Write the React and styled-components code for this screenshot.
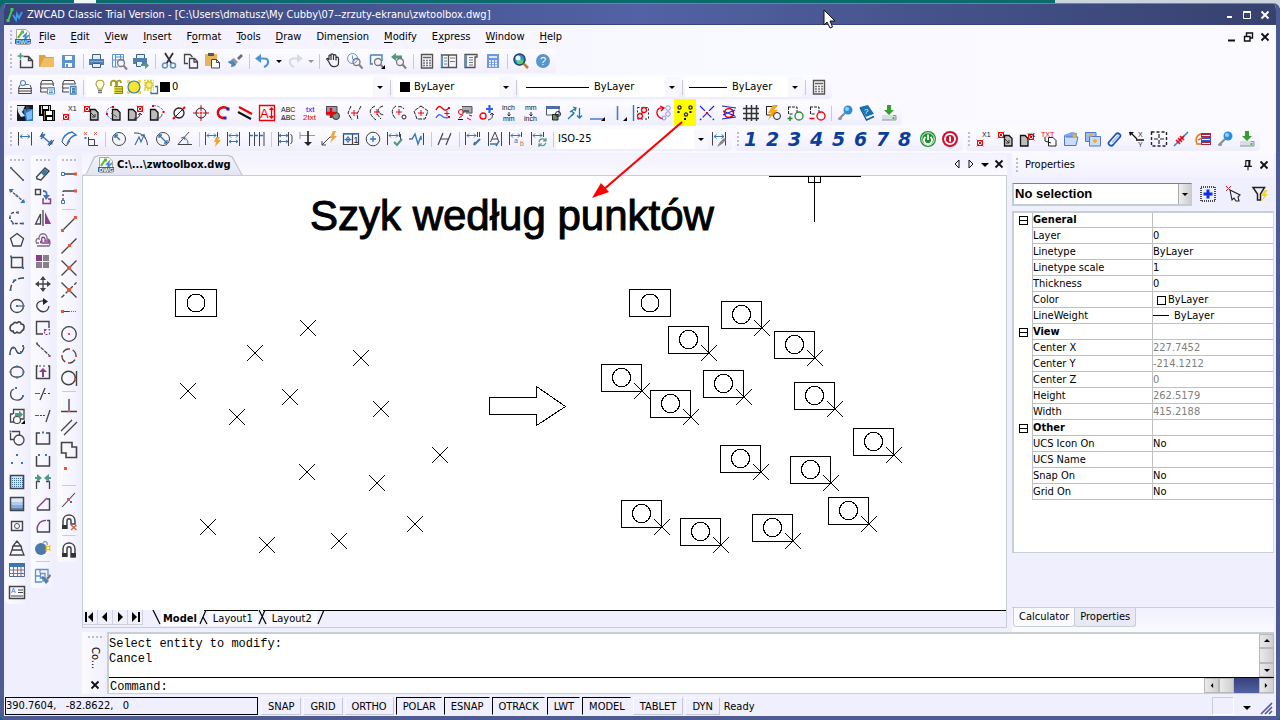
import React from "react";
import styled, { createGlobalStyle, css } from "styled-components";

const ui = `"DejaVu Sans Condensed", "DejaVu Sans", "Noto Sans", sans-serif`;

const Global = createGlobalStyle`
  * { box-sizing: border-box; }
  body { margin: 0; background: #0b6a6c; color: #000; font: 11px/14px ${ui}; }
  button, select, input { font: inherit; color: inherit; margin: 0; padding: 0; border: 0; background: none; border-radius: 0; }
  svg { display: block; flex: none; }
`;

/* ---------- icon drawing helpers ---------- */
const K = "#444444";
const B = "#3a77b2";
const P = "#8b3f86";
const R = "#f00000";
const O = "#df5a3c";
const G = "#4f9a80";
const L = "#6262f0";

const S = (color, d, w = 1, dash) => ({ color, d, w, dash });
const F = (color, d) => ({ color, d, fill: true });
const T = (x, y, size, color, text) => ({ x, y, size, color, text });
const C = (x, y, r) => `M${x - r} ${y}a${r} ${r} 0 1 0 ${2 * r} 0a${r} ${r} 0 1 0 ${-2 * r} 0Z`;
const D = (color, ...pts) => F(color, pts.map(([x, y]) => `M${x - 1} ${y - 1}h2v2h-2z`).join(""));
const D3 = (color, ...pts) => F(color, pts.map(([x, y]) => `M${x - 1.5} ${y - 1.5}h3v3h-3z`).join(""));

const page = [F("#bdbdbd", "M7 4h5l3 3v8H7z"), S("#111", "M7.5 4.5H12L15 7.5V15H7.5Z", 1.3)];
const pageL = [F("#bdbdbd", "M1 4h5l3 3v8H1z"), S("#111", "M1.5 4.5H6L9 7.5V15H1.5Z", 1.3)];
const redBox = (x, y) => [S(R, `M${x} ${y}h5v5h-5z`), S(R, `M${x - 1} ${y - 1}l7 7M${x + 6} ${y - 1}l-7 7`, 0.6), D(R, [x + 2.5, y + 2.5])];
const dim = [S(K, "M1.5 1V14.5M14.5 1V14.5"), S(B, "M3 5.5H13M5.5 3.5L3 5.5L5.5 7.5M10.5 3.5L13 5.5L10.5 7.5")];
const dimTop = [S(K, "M.5 1V14M12.5 1V6"), S(B, "M2 4.5H11M4 2.5L2 4.5L4 6.5M9 2.5L11 4.5L9 6.5")];
const lens = (x, y) => [S("#777", C(x, y, 3.5), 1.3), S("#8a7d88", `M${x + 2.5} ${y + 2.5}L${x + 6} ${y + 6.5}`, 2)];
const drop = [F("#000", "M16 12v4h-4z")];
const keyIcon = [S("#8a949c", "M8 8L1.5 14.5M3 13l1.5 1.5", 2.4), F("#2c8fd8", C(11, 5, 4.5)), F("#8fd2f8", C(10, 4, 2))];
const installIcon = [F("#33a02c", "M6 0h4v5h3L8 10L3 5h3z"), F("#d9dee4", "M1 10h14v5H1z"), S("#8b949c", "M1 15h14V10.5H12"), D("#3fbf3f", [12.5, 13])];

const icons = {
  new: [S(K, "M3.5 7V14.5H15.5V7.5L11.5 3.5H6.5M11.5 3.5V7.5H15.5", 1.4), S(G, "M3.5 0V6M.5 3H6.5", 1.6)],
  open: [F("#e0a33c", "M0 2h6l1 2h8v10H0z"), F("#f0bd63", "M5 5h10v9H1z")],
  save: [F("#5b93cc", "M1 2h13v13H1z"), F("#fff", "M4 3h7v4H4zM4 10h7v4H4z"), F("#5b93cc", "M5 11h2v3H5z")],
  print: [F("#4f7fae", "M0 6h15v6H0z"), F("#e9eef6", "M3 1h9v5H3zM3 10h9v5H3z"), S("#3b5f86", "M3.5 6V1.5H11.5V6M3.5 10.5H11.5V14.5H3.5Z"), S("#7fb1e2", "M1 8.5h13")],
  preview: [S("#5b93cc", "M1.5 1.5H12.5V7M1.5 1.5V14H7M4.5 1.5V7M9.5 1.5V7M1.5 7H12M4.5 4H12M4.5 7V14"), ...lens(10, 10)],
  publish: [F("#4f7fae", "M0 5h14v6H0z"), F("#e9eef6", "M3 1h8v4H3zM3 9h6v4H3z"), S("#3b5f86", "M3.5 5V1.5H11.5V5M3.5 9V13.5H8"), F(G, "M8 11h4V8.5l4 4l-4 3.5v-3H8z")],
  cut: [S("#333", "M4 0L10.5 10.5M12 0L5.5 10.5", 1.8), S("#5f92bf", C(4, 12.5, 2.5) + C(12, 12.5, 2.5), 1.5)],
  copy: [S(K, "M5 10.5H1.5V1.5H7L9.5 4", 1.3), S(K, "M6.5 5.5H11.5L14.5 8.5V15H6.5ZM11 5.5V9H14.5", 1.3)],
  paste: [F("#e8b45a", "M0 1h12v12H0z"), F("#555", "M3 0h6v3H3z"), F("#fff", "M6 6h6l3 3v6H6z"), S(K, "M6.5 6.5H11.5L14.5 9.5V15H6.5ZM11.5 6.5V9.5H14.5")],
  match: [F("#6b6f78", "M10 5L14 1L16 3L12 7z"), F("#8f97a3", "M7 5l4 4-2 2-5-4z"), F("#4c86ba", "M1 8c2 1 3-1 4-1l4 4c0 2-3 3-5 3 0-1 1-2 0-3-1 0-3-1-3-3z")],
  undo: [S("#4f93d4", "M3 5.5H9C15 5.5 14 12 9 14", 2.2), F("#4f93d4", "M6 1v9L0 5.5z")],
  redo: [S("#d6dae4", "M13 5.5H7C1 5.5 2 12 7 14", 2.2), F("#d6dae4", "M10 1v9l6-4.5z")],
  pan: [S("#333", "M4 9L2 6.5C1 5 3 5 4 7V3C4 1.5 6 1.5 6 3V7M6 7V2C6 .5 8 .5 8.5 2V7M8.5 7V2.5C9 1 11 1.5 11 3V7.5M11 7.5V5C12 3.5 13.5 4 13.5 5.5V10C13.5 14 6 16 4 9", 1.2)],
  zoomrt: [S("#5b93cc", C(5.5, 5.5, 5) + "M5.5 2.5V6L8 7.5"), ...lens(9.5, 9)],
  zoomwin: [S("#4a80ba", "M1.5 2H13V8M1.5 2V11H4", 1.4), ...lens(9, 9), ...drop],
  zoomprev: [F(G, "M0 4L5 0V2.5H11V5.5H5V8z"), ...lens(9, 9)],
  calc: [S("#5a524f", "M2.5 1.5H13.5V15H2.5Z", 1.4), S("#666", "M4 4.5H12", 1.5), S("#777", "M4 7.5H12M4 10H12M4 12.5H12", 1.5, "2 1")],
  design: [S("#5a524f", "M.5 2H15.5V14.5H.5ZM7.5 2V14.5", 1.3), S("#777", "M3 5H6M3 8H6M3 11H6M9 5H14M9 8.5H14"), S("#4f93d4", "M1 3V14", 2)],
  palette: [S("#5a524f", "M2 1.5H14V4H12V14.5H2Z", 1.3), S("#4f93d4", "M3 2V14", 2), S("#777", "M6 4.5H10M6 7H10M6 9.5H10M6 12H10")],
  bluecalc: [F("#6d97e0", "M2 1h12v14H2z"), F("#dbe8ff", "M4 3h8v2H4z"), S("#fff", "M4 8H12M4 10.5H12M4 13H12", 1.5, "2 1")],
  find: [F("#2f8fc8", C(6.5, 6.5, 6)), F("#54d07a", C(7, 9, 3)), F("#e7f6ff", C(5, 5, 2.5)), S("#24476b", C(6.5, 6.5, 5.5), 1.4), S("#c07a32", "M10.5 10.5L15 15", 2.5)],
  help: [F("#5b93cc", C(8, 8, 7)), T(5, 12, 11, "#fff", "?")],

  layers: [S(K, "M3 6L1.5 9.5H14.5L13 6M2 9.5L1.5 12H14.5L14 9.5M2 12L1.5 14.5H14.5L14 12"), S("#5b86b4", C(6, 4, 2.5) + "M8 5.5H12", 1.2)],
  layermgr: [S(K, "M3 1.5H13L14.5 5H1.5ZM2 5L1.5 9H8M2 9L1.5 13H8M14 5L14.5 7"), F("#fff", "M8 8h8v8H8z"), S("#5b93cc", "M8.5 8.5H15.5V15H8.5ZM8 10H16M10 12H14M10 13.5H14")],
  layerstate: [S(K, "M3 1.5H13L14.5 5H1.5ZM2 5L1.5 9H8M2 9L1.5 13H8"), F("#fff", "M9 7h6v8H9z"), S("#4b83b6", "M9.5 7.5H15V15H9.5ZM11 9.5H14M11 11H14", 1.3), F("#4b83b6", "M11 12h3v2h-3z")],
  bulb: [F("#fffbe0", C(8, 5.5, 4)), S("#ada23c", "M6 10C6 8 4 7 4 5C4 0 12 0 12 5C12 7 10 8 10 10Z", 1.2), S("#777", "M6 11.5H10M6 13.5H10", 1.3)],
  lock: [S("#a79e20", "M2 7V4C2 1 7 1 7 4V8M8 7V3C9 1 12 1 12 4", 1.8), F("#e4da49", "M5 7h9v8H5z"), S("#8d8619", "M5.5 7.5H13.5V14.5H5.5M6 10H13M6 12.5H13")],
  sun: [F("#e8dc58", "M1 1h3v3H1zM12 1h3v3h-3zM1 12h3v3H1zM12 12h3v3h-3z"), F("#f8e531", C(8, 8, 6)), S("#3a8198", C(8, 8, 6), 1.2)],
  sunvp: [S("#e0cf38", "M1 1.5H11M1 4H11M1 6.500H11M1 9H11M1 11H11", 1.5, "2 1"), F("#d3c736", C(6, 6, 4)), F("#f5ed80", C(6, 6, 2.5)), S("#3c7290", "M12 7.5H14.5V14.5H8V12.5", 1.3)],

  earth: [F("#101a26", "M0 0h16v16H0z"), F("#2c77c8", "M6 4h10v12H9z"), F("#7cc0ff", "M9 8l6-3v9l-5 1z"), F("#dfe6ea", "M0 1h8L5 7l3 4-4 1-3-5z"), F("#34414c", "M9 1l4 1-4 4z")],
  saves: [F("#000", "M0 0h12v11H0zM4 5h12v11H4z"), F("#d9dc4b", "M2 1h1v8H2zM10 1h1v5h-1z"), F("#fff", "M4 1h5v3H4zM7 6h6v4H7zM8 12h5v3H8z"), F("#7c7d20", "M5 6h1v9H5zM14 6h1v9h-1z")],
  numx: [...redBox(2.5, 9.5), T(7, 6, 7, "#111", "X1")],
  cpa: [...page, ...redBox(1.5, 1.5), S("#333", "M6 6L12 12M12 9V12H9")],
  cpb: [...page, S(L, "M8 2C3 2 1 6 2 9S5 14 7 14", 1, "3 1"), D(R, [2, 9], [8, 2]), S("#555", "M6 8L12 12")],
  cpc: [...pageL, ...redBox(10.5, 1.5), S("#333", "M7 13C10 14 13 12 13 9M11 10L13 8L15 10")],
  cpd: [...pageL, S(L, "M4 1C9 0 13 3 15 7", 1, "3 1"), D(R, [4, 1], [14.5, 7]), S("#555", "M7 13C10 14 13 12 13 9")],
  diam: [S("#222", C(8, 8, 5), 1.3), S("#222", "M2 14L14 2"), S(R, "M2 14l2-2M12 4l2-2", 2)],
  target: [S(R, "M8 0V6M8 10V16M0 8H6M10 8H16"), S("#222", C(8, 8, 5)), S(R, C(8, 8, 1))],
  carc: [S(R, "M13 4C8 0 2 4 3 9C4 12 6 13 9 13", 2.4), D3("#2020d0", [13, 4]), D3("#2020d0", [10, 13])],
  twolines: [S(R, "M2 2L15 9", 2), S("#111", "M1 7L14 14", 2)],
  aframe: [S(R, "M.5 .5H15.5V15.5H.5Z", 1.3), T(1, 13, 13, R, "A"), S(R, "M12.5 3V13M10.5 5L12.5 3L14.5 5M10.5 11L12.5 13L14.5 11", 1.3)],
  abc: [T(0, 7, 7, "#111", "ABC"), T(0, 15, 7, "#111", "ABC"), S(L, "M1 14.5H7")],
  txt: [T(3, 7, 8, "#1010e8", "txt"), T(0, 15, 8, R, "2txt")],
  attach: [F("#9d97ad", "M1 1h11v9H1z"), S("#4c4759", "M1.5 1.5H12V10H1.5Z"), F("#7c9678", C(11, 11, 3.5)), S("#333", C(11, 11, 3.5)), S(R, "M6 3V13M1 8H11", 2.4)],
  crossa: [S("#222", "M4 1L1 8L5 15M14 1L10 9L11 15", 1, "4 1"), S(R, "M4 8H10M7 5V11")],
  crossb: [S("#222", "M6 1C-1 4 0 10 7 15M14 1C7 3 8 9 15 10M8 9L12 14", 1, "4 1"), S(R, "M5 7H11M8 4V10")],
  crossc: [S("#222", "M5 1C0 4 0 9 5 14M7 2C9 1 12 2 13 4", 1, "4 1"), S("#222", C(13, 12, 2)), S(R, "M5 7H11M8 4V10")],
  crossd: [S("#222", "M8 1L15 6L12 14H4L1 6Z", 1, "4 1"), S(R, "M5 8H11M8 5V11")],
  waves: [S(R, "M1 5C3 2 4 0 7 3S11 6 14 3", 1.4), S("#3c7be0", "M1 13C3 9 5 9 7 11S12 13 14 12", 1.4), S(R, "M12 6V11M9.5 8.5H14.5"), D(R, [14, 3], [14, 12])],
  selnote: [F("#b0a8b6", "M5 1h10v7H5z"), S("#555", "M5 1.5H15V8H9"), S(R, C(4, 7, 2.5)), S("#111", "M7 6H12M1 14.5H6"), S(R, "M10 13l4 2M2 13l4-3M12 10l3 1")],
  addcirc: [S(R, C(4, 11, 3), 1.3), S("#2f5fe8", "M10.5 0V8M7 4H14", 2.2), S("#333", "M9 15C13 14 14 12 13 9M11 10L13 8L15 10")],
  inchmm: [T(1, 5, 7, "#111", "inch"), T(2, 16, 7, "#111", "mm"), S("#222", "M8 7V11M6.5 9.5L8 11L9.5 9.5")],
  mminch: [T(2, 5, 7, "#111", "mm"), T(1, 16, 7, "#111", "inch"), S("#222", "M8 7V11M6.5 9.5L8 11L9.5 9.5")],
  xref: [F("#fff", "M1 1h13v9H1z"), S("#4b5470", "M1.5 1.5H14V10H1.5Z"), F("#4b6fa8", "M1 1h14v3H1z"), F("#6e8a6c", "M7 9h6v6H7z"), S("#222", "M7.5 9.5H13V15H7.5Z" + C(13, 9, 2.5))],
  sorts: [S("#1f7bb0", "M1 14L7 8M4 6L7 8L5 11M3 7L9 3M6 2L9 3L8 6M12.5 3V13M10 10.5L12.5 13L15 10.5", 1.3)],
  hline: [S("#4a78d6", "M1 14H15", 1.6), ...drop],
  vline: [S("#4a78d6", "M6.5 1V15", 1.6), ...drop],
  redsel: [S("#1880d0", "M.5 0V16", 1.4), S("#222", "M4.5 2.5H15.5V14H4.5Z", 1, "2 2"), S(R, C(11, 5, 2.5) + C(7, 11, 2.5) + "M8 9L10 7", 1.3)],
  rotate: [S(R, "M8 3C2 2 0 8 4 12C5 13 6 14 8 13.5M5 1L9 3L6 6", 1.3), S("#8f8fee", C(13, 3, 2.3) + C(13, 9, 2.3) + C(9, 13, 2))],
  points: [S("#222", C(2.5, 2.5, 1.6) + C(13.5, 2.5, 1.6) + C(9, 9.5, 1.6), 1.3), D("#111", [1.5, 7], [13.5, 7], [8, 14])],
  xblue: [S("#2020e8", "M1 1L15 15M15 1L1 15", 1.2, "7 2"), D(R, [8, 8])],
  circline: [S(R, C(8, 8, 4.5), 1.6), S("#2020d0", "M1 1L15 3M2 6L14 11M14 5L2 10M1 14L15 12", 1.2)],
  grid: [S("#333", "M3.5 0V16M8.5 0V16M13.5 0V16M0 3.5H16M0 8.5H16M0 13.5H16", 1.5)],
  bolt: [S("#222", "M1 1.5H12M1.5 1V10H8"), F("#f4a71a", "M8 0h5L9 5h4L3 15l3-7H3z"), S("#222", C(12, 11, 3.5))],
  addsel: [S("#222", "M1 2H10V7M1.5 2V9H6", 1, "3 1"), S("#2a8a2a", C(12, 11, 4), 1.3), S("#2a8a2a", "M3 11V16M.5 13.5H5.5", 1.4)],
  remsel: [S("#222", "M1 2H10V7M1.5 2V9H6", 1, "3 1"), S(R, C(12, 11, 4), 1.3), S(R, "M.5 13.5H5.5", 1.6)],
  key: keyIcon,
  book: [F("#1673b5", "M1 2L9 0L15 9L7 12z"), F("#eaf6ff", "M7 12l8-3v2l-7 4z"), S("#0f5b96", "M1 2.500L7.500 15L15 11.500", 1.4), T(5, 9, 8, "#fff", "?")],
  install: installIcon,

  dlin: dim,
  dalign: [S(B, "M3 5L11 12M2 8L6 3M9 14L13 9", 1.5), D3(B, [3.5, 4.5], [12, 12]), S(K, "M1 6L4 1M10 15L15 9")],
  darc: [S(K, "M1 11L5 15L9 10"), S(B, "M1 11C2 6 6 2 11 1L15 4C10 5 8 8 6 13", 1.3)],
  dord: [S(K, "M5.5 6V14.5H15M5.5 8.5H11.5V14.5"), S("#c06a50", "M1 1L4 4M4 1L1 4M11 1l3 3M14 1l-3 3"), S(B, "M2.5 6V8", 2)],
  drad: [S(K, C(8, 8, 6.5)), S(B, "M4 4L9 9M4 7V4H7", 1.5)],
  djog: [S(K, "M1 2C9 1 14 7 14.5 14"), S(B, "M2 14L6 6L8 11L11 4M8 5L11 3.5L12 7", 1.2)],
  ddia: [S(K, C(8, 8, 6.5)), S(B, "M4 4L12 12M4 7V4H7M12 9V12H9", 1.3)],
  dang: [S(K, "M12 1L1 13.5H15"), S(B, "M7 6C10 8 11 10 11 13M4 7L7 6L8 9")],
  dquick: [...dimTop, F("#eda739", "M11 6h4l-2 3h3l-6 7 1-5H9z")],
  dbase: [...dimTop, S(K, "M12.5 6V15M.5 9V15"), S(B, "M2 10.5H11M4 9L2 10.5L4 12M9 9L11 10.5L9 12")],
  dcont: [S(K, "M.5 1V15M5.5 1V15M10.5 1V15M15 1V15"), S(B, "M1 4.5H15", 1.5, "3 2")],
  dspace: [S(K, "M1.5 1V15M11.5 1V15"), S(B, "M2 4.5H11M2 10.5H11M4 3L2 4.5L4 6M9 3L11 4.5L9 6M4 9L2 10.5L4 12M9 9L11 10.5L9 12"), S(K, "M13.5 3L15 5V11L13.5 13")],
  dbreak: [S("#999", "M1 4.5H16M1 1V8"), S("#222", "M9 0V12", 1.6), F("#222", "M5 11h8l-4 4z")],
  leader: [S(K, "M1 14L9 6H12M1 10V14H5"), F("#eda739", "M12 0h3l-2 5h3L9 12l2-5H9z")],
  tol: [S(K, "M.5 2.5H15.5V13.5H.5ZM9.5 2V13", 1.2), S(B, "M0 3H16", 1.6), S(B, C(5, 8.5, 2) + "M5 5V12M1.5 8.5H8.5"), T(10.5, 12, 9, "#222", "1")],
  center: [S(K, C(8, 8, 6.8)), S(B, "M8 5V11M5 8H11", 1.4)],
  inspect: [...dimTop, S(K, "M13.5 3V9"), S(G, "M7 11L10 14L15 8", 2)],
  jogline: [S(B, "M0 8H3L6 3L9 13L12 5V8H13", 1.4), S(K, "M14.5 2V14")],
  oblique: [S(K, "M1 14L6 2M9 14L14 2M3 8H12", 1.2)],
  dedit: [...dimTop, S(B, "M9 14L15 8M9 14l1-3", 2), S(K, "M14.5 1V6")],
  dtedit: [S(K, "M1.5 1V15M14.5 1V15M3.5 11L8 1L12 11M5 8H11"), S(B, "M3 13H10M12 10L9 15", 1.5)],
  doverride: [...dimTop, T(5, 12, 7, B, "a"), T(11, 15, 7, O, "b")],
  dupdate: [...dimTop, S(G, "M8 11C9 7 13 7 15 10M15 12C13 16 9 15 8 13M15 7V10H12M8 16V13H11", 1.2)],
  dstyle: [...dim, F("#8a8482", "M13 7l2 2-4 4-5 3 3-5z")],

  power: [F("#1d8f2a", C(8, 8, 8)), S("#fff", C(8, 8, 6.3), 0.9), S("#fff", "M5.500 6A4 4 0 1 0 10.500 6M8 3.5V9", 1.8)],
  stop: [F("#cf1130", C(8, 8, 8)), S("#fff", C(8, 8, 5), 1.8), S("#fff", "M8 5.5V10.5", 2)],
  cpx: [...pageL, ...redBox(9.5, 3.5), T(9, 6, 6, "#111", "X1")],
  cptxt: [F("#fff", "M7 6h5l3 3v6H7z"), S("#222", "M7.5 6.5H12L15 9.5V15H7.5ZM4 6L4 10L10 12"), T(0, 6, 7, R, "TXT")],
  folder1: [F("#7ba4ea", "M1 4l8-3 5 1v9L1 15z"), F("#c9dcfa", "M2 6h13l-2 9H1z"), S("#4d7acb", "M1.5 5V14.5H13L15 6H3"), F("#efb02a", C(11.5, 5, 2))],
  folder2: [F("#9dbef2", "M0 1h11v9H0z"), F("#c9dcfa", "M4 5h12v10H4z"), S("#4d7acb", "M.5 1.5H11V5M.5 1.5V10.5H4M4.5 5.5H15.5V15H4.5Z"), F("#efb02a", C(6, 4, 1.8) + C(10, 10, 2))],
  clip: [S("#1f55b4", "M2 11L9 3C11 1 15 4 13 6L6 14C4 16 0 13 2 11Z", 1.8), S("#9fbce8", "M5 11.5L11.500 4.5", 1.4)],
  xy: [S("#111", "M1 1L8 8M7 9H15", 1.3), F("#111", "M0 1h5L1 5z"), T(9, 6, 7, "#333", "X"), T(9, 16, 7, "#333", "Y")],
  sel4: [S("#222", "M.5 1H15.5V15H.5Z", 1.4, "3 2"), S("#222", "M8 3V13M3 8H13", 1.2, "4 2")],
  brk: [S("#2677e0", "M1 15L15 1", 1.4), S(R, "M3 9L7 13M5 7L9 11M7 5L11 9M6 10l5-5", 1.6)],
  books: [F("#a02840", "M6 2h10v4H6zM6 10h10v4H6z"), F("#3b56c4", "M6 6h10v4H6z"), S("#f3f3ff", "M7 4.5H15M7 8.5H15M7 12.5H15"), S("#e07a24", "M6 3C1 4 0 10 2 13H6M7 7L3 9", 1.6)],

  line: [S(K, "M2 2L14 14", 1.3), D(B, [2, 2], [14, 14])],
  xline: [S(K, "M1 2L15 14", 1.2, "3 1"), F(B, "M0 1h5L1 5zM16 15h-5l4-4z"), D(B, [7.5, 7.5])],
  pline: [S(K, "M10 2.5H5C-1 3 0 12 6 13.5H13", 1.3, "3 2"), D(B, [9, 2.5], [1, 8], [4, 13.5], [14, 13.5])],
  polygon: [S(K, "M8 1.5L14.5 6.5L12 14H4L1.5 6.5Z", 1.3)],
  rect: [S(K, "M2.5 3.5H13.5V13.5H2.5Z", 1.5), D(B, [2, 2.5], [14, 14])],
  arc: [S(K, "M14 2C7 2 2 6 1.5 14", 1.4, "5 2"), D(B, [14, 2], [5, 4.5], [1.5, 14])],
  circle: [S(K, C(8, 8, 6.5), 1.3), S(K, "M8 8H14"), D(B, [8, 8], [14.5, 8])],
  cloud: [S(K, "M4 4C6 1 7 3 8 3C10 1 12 2 12 4C16 4 16 9 13 11C11 14 9 13 8 12C6 14 4 13 4 11C0 12 0 5 4 4Z", 1.6)],
  spline: [S(K, "M1 11C2 5 5 3 7 8S13 13 15 5", 1.3), D(B, [1, 12], [4, 6], [14, 4], [12, 10])],
  ellipse: [S(K, "M1.5 8C1.5 1 14.5 1 14.5 8C14.5 15 1.5 15 1.5 8Z", 1.3), D(B, [8, 2.5], [8, 13.5], [1.5, 8], [14.5, 8])],
  ellarc: [S(K, "M5 3C0 5 1 12 5 13.5C10 15 13 13 14 10", 1.3), D(B, [7, 2], [14, 10])],
  insert: [S(K, "M4.5 6V1.5H15V11H10M4 6H1.5V14H5", 1.3), F("#fff", C(8, 12, 3.5)), S(K, C(8, 12, 3.5), 1.2), F(G, "M6 5h4V2.5l4 4-4 4V8H6z"), ...drop],
  block: [S(K, "M3 1.5H10.5V6M1.5 3V9.5H5", 1.3), D(B, [1.5, 1.5]), S(K, C(10, 10, 5), 1.3)],
  point: [D(B, [8, 3], [3, 11], [13, 11])],
  hatch: [F("#d8e6f8", "M2 2h13v13H2z"), S("#3f6fae", "M3 4.5H14M3 6.5H14M3 8.5H14M3 10.5H14M3 12.5H14", 1.2, "1 1"), S(K, "M1.5 1.5H14.5V14.5H1.5Z", 1.6)],
  gradient: [F("#dbe7f5", "M2 2h12v4H2z"), F("#b3cbe6", "M2 6h12v3H2z"), F("#88addb", "M2 9h12v3H2z"), F("#5587c0", "M2 12h12v3H2z"), S(K, "M1.5 1.5H14.5V14.5H1.5Z", 1.5)],
  boundary: [S(K, "M2.5 3.5H13.5V12.5H2.5Z", 1.4), S("#555", C(8, 8, 2.5))],
  table3: [S(K, "M8 1L4 6H12ZM4 6L3 10H13L12 6M3 10L1 15H15L13 10", 1.3)],
  table: [F(B, "M0 1h16v4H0z"), S("#55679a", "M.5 1.5H15.5V14.5H.5Z"), S("#8b6a78", "M4.5 5V14M8.5 5V14M12 5V14M0 8H16M0 11.5H16")],
  mtext: [S(K, "M.5 2.5H15.5V14.5H.5Z", 1.5), T(2, 9, 7, B, "A"), S(K, "M9 6H14M9 8.5H14M2 12H14")],

  erase: [S(K, "M1.5 11L10 2L14 5L6 14L2 13Z", 1.4), F(B, "M6 7l4-4 3 2-4 5z")],
  copyobj: [S(K, "M.5 1.5H5.5V6.5H.5Z", 1.4), S(B, "M8 3C12 3 12 5 11.5 9", 1.8), F(B, "M8 7h7l-4 5z"), S(P, "M9 11H8V15.5H15.5V11H13", 1.5)],
  mirror: [S(K, "M5.5 4V14H.5ZM8 0V16", 1.3), F(P, "M10 2v12h6z")],
  offset: [S("#7a6c7e", "M4 11H1.5C0 8 2 6 4 7C3 0 13 0 12 7C15 7 16 11 14 14H2", 1.3), S(P, "M7 11C5 11 5 9 7 9C5 4 11 4 10 9H14V11Z", 1.3)],
  array: [F(P, "M1 1h6v6H1z"), F("#8c7f8c", "M8 1h6v6H8zM1 8h6v6H1zM8 8h6v6H8z")],
  move: [S(K, "M8 1V15M1 8H15", 1.3), F(K, "M5 4l3-4 3 4zM5 12l3 4 3-4zM4 5L0 8l4 3zM12 5l4 3-4 3z")],
  rotateobj: [S(K, "M9 3C3 2 0 7 3 11S13 15 14 8", 1.3), F("#222", "M8 0l5 3.5L8 7z")],
  scale: [S(K, "M14 8V1.5H1.5V14H8", 1.4), S(P, "M9.5 9.5H14.5V14.5H9.5Z", 1.2, "2 2"), D(P, [10, 10])],
  stretch: [S(K, "M2 2L14 13", 1.2, "4 1"), D(P, [2, 1.5], [14.5, 14])],
  lengthen: [S(K, "M3 2H1.5V14.5H14.5V2H13", 1.5), S(K, "M4 2H12", 1.2, "2 2"), F(P, "M8 4l4 4H9v5H7V8H4z")],
  trim: [S(K, "M5 14L10 2", 1.3), S(P, "M0 7.5H5"), S(K, "M9 7.5H16", 1.2, "2 2")],
  extend: [S(K, "M11 14L15 2", 1.3), S(P, "M0 7.5H4"), S(K, "M5 7.5H11", 1.2, "2 1")],
  brkpt: [S(K, "M5 3H1.5V14H14.5V3H11", 1.5), D(B, [8, 2.5])],
  brk2: [S(K, "M1.5 4V14H14.5V4", 1.5), D(B, [4, 3], [11, 3])],
  join: [S(K, "M1.5 7V15M1 7.500H5M14.5 7V15M15 7.500H11", 1.3), F(G, "M0 3h2V0l5 4-5 4V5H0zM16 3h-2V0L9 4l5 4V5h2z")],
  chamfer: [S(K, "M12 3H14.5V14H2.5V12", 1.4), S(P, "M2 12L12 2", 1.4)],
  fillet: [S(K, "M12 2.5H14.5V14H2.5V12", 1.4), S(P, "M2 12C2 6 6 2 11 2.5", 1.4)],
  explode: [F("#4d79a8", C(6, 9, 6)), S("#79a6c8", "M8 3C10 0 13 2 12 5", 1.3), F("#f2bf24", "M10 5l3 1 3-1-1 3 1 3-3-1-3 1 1-3z"), D("#fff2a0", [13, 8])],
  qselect: [S("#5b93cc", "M.5 1.5H13V8M.5 1.5V14H7M5 1.5V5M1 8H5M5.5 5.5H10V10H5.5ZM8 10V14", 1.3), F("#4f80ae", "M6 9l2-1 6 5-3 3z"), F("#777", "M11 10l4-4 1 2-3 4z")],

  s1: [S(K, "M1 8H14", 1.4), F("#fff", "M.5 6.500h3v3h-3z"), S(B, "M.5 6.5H3.5V9.5H.5Z"), D3(O, [14.5, 8])],
  s2: [S(K, "M2 12V3", 1.3, "2 2"), S(K, "M2 3H13", 1.4), S(B, "M.5 12.5H3.5V15.5H.5Z"), D3(O, [14.5, 3])],
  s3: [S(K, "M1.5 14.5L14.5 1.5", 1.2), D3(O, [1.5, 14.5], [14.5, 1.5])],
  s4: [S(K, "M.5 15.5L15.5 .5", 1.2), D3(O, [8.5, 7.5])],
  s5: [S(K, "M.5 .5L15.5 15.5M.5 15.5L15.5 .5", 1.3), F(O, "M6 6h4v4H6z")],
  s6: [S(K, "M.5 .5L15.5 15.5", 1.3), S(K, "M.5 15.5L15.5 .5", 1.3, "4 2"), F(O, "M6 6h4v4H6z")],
  s7: [S(K, "M3 7.5H8"), S(B, "M8 7.5H16", 1, "1 1"), D3(O, [1.5, 7.5])],
  s8: [S(K, C(8, 8, 7.3), 1.3), D(O, [8, 8])],
  s9: [S(K, C(8, 8, 7), 1.3, "7 4"), D(O, [8, 1], [8, 15], [1, 8], [15, 8])],
  s10: [S(K, C(7.5, 8, 6.8) + "M15.5 1V16", 1.4), D(O, [14, 9])],
  s11: [S(K, "M8 1V13M0 13.5H16", 1.4), D(O, [8, 13])],
  s12: [S(K, "M0 11L11 0M3 15L16 2", 1.3)],
  s13: [S(K, "M.5 .5H11V5H15.5V15.5H5V11H.5Z", 1.6)],
  s14: [D3(O, [4.5, 4.5])],
  s15: [S(K, "M1 15L14 1", 1.1), D3(O, [7.5, 7.5]), D(B, [10, 10])],
  s16: [S(K, "M2 15V7C2-1 14-1 14 7V10H10V7C10 4 6 4 6 7V15", 1.5), F("#333", "M1 11h5v4H1z"), S(O, "M10 11L15.5 16M15.5 11L10 16", 1.4)],
  s17: [S(K, "M2 15V7C2-1 14-1 14 7V15H10V7C10 4 6 4 6 7V15", 1.5), F("#333", "M1 11h5v4H1zM10 11h5v4h-5z")],

  pickadd: [S("#111", "M1 1H15V15H1Z", 1.5, "1 1"), F("#0f2fe0", "M6.5 3.5h3v3h3v3h-3v3h-3v-3h-3v-3h3z")],
  pick: [S("#c02030", "M0 0L5 5M5 0L0 5"), S("#222", "M4 4L6 14L8 12L10 15H13L12 11L14 9Z", 1.1)],
  filter: [S("#222", "M1 1.5H12.5L8.5 8V14H5.5V8Z", 1.5), F("#f0d91c", "M13 4l-4 6h3l-3 6 7-8h-3l3-4z")],
  pin: [S("#111", "M5.5 3V9M10 3V9M3.5 9.5H12.5M8 10V14M5 3H11M9 3V9", 1.3)],
  close: [S("#111", "M4.5 4.5L11.5 11.5M11.5 4.5L4.5 11.5", 1.8)],
  closew: [S("#fff", "M4.5 4.5L11.5 11.5M11.5 4.5L4.5 11.5", 2)],
  maxw: [S("#fff", "M4.5 4.5H11.5V11.5H4.5Z"), S("#fff", "M4 5H12", 2)],
  minw: [S("#fff", "M6 10H11", 2)],
  min: [S("#111", "M5 11.5H12", 2)],
  restore: [S("#111", "M6.5 7V4H12.5V9H10", 1.4), S("#111", "M4.5 7.5H10V12H4.5Z", 1.4)],
  first: [S("#000", "M4 3V13", 2), F("#000", "M11 3v10L6 8z")],
  prev: [F("#000", "M10 3v10L5 8z")],
  next: [F("#000", "M6 3v10l5-5z")],
  last: [F("#000", "M5 3v10l5-5z"), S("#000", "M12 3V13", 2)],
  left: [S("#111", "M10 4V12L6 8Z")],
  right: [S("#111", "M6 4V12L10 8Z")],
  down: [F("#000", "M4 7h8l-4 4z")],
  tri: [F("#000", "M5 7h6l-3 3z")],
  up: [F("#000", "M5 9h6L8 6z")],
  sleft: [F("#000", "M10 5v6L7 8z")],
  sright: [F("#000", "M6 5v6l3-3z")],
  dwg: [F("#fff", "M1 0h10l4 4v12H1z"), S("#a6a69a", "M1.5 .5H11L14.5 4V15.5H1.5Z"), S("#56bd2a", "M3 9L7 3", 2.2), D3("#56bd2a", [7.5, 3]), S("#3f86cf", "M8 8L11 5L10 10L14 6", 1.6), F("#1b6ca8", "M0 10h16v5H0z"), T(1, 15, 6, "#fff", "DWG")],
  app: [S("#3fcf4c", "M2 14L6 3", 2), D3("#3fcf4c", [6, 2.5], [2, 13.5]), S("#3f9be8", "M7 8L10 13L11 7L13 11L16 5", 1.8)],
};

const Icon = ({ name, size = 16 }) => (
  <svg width={size} height={size} viewBox="0 0 16 16" aria-hidden="true" overflow="visible">
    {icons[name].map((p, i) =>
      p.text ? (
        <text key={i} x={p.x} y={p.y} fontSize={p.size} fill={p.color} fontFamily="Liberation Sans, sans-serif">{p.text}</text>
      ) : p.fill ? (
        <path key={i} d={p.d} fill={p.color} />
      ) : (
        <path key={i} d={p.d} fill="none" stroke={p.color} strokeWidth={p.w} strokeDasharray={p.dash} />
      )
    )}
  </svg>
);

/* ---------- window frame ---------- */
const Desktop = styled.div`
  min-height: 100vh; display: flex; flex-direction: column; padding-top: 3px; position: relative; overflow: hidden;
  background: linear-gradient(90deg, #0b6a6c 74px, #eef6f6 74px 96px, #0b6a6c 96px calc(100% - 225px), #c9d4de calc(100% - 225px)) top / 100% 8px no-repeat, #0b6a6c;
`;
const Frame = styled.div`
  flex: 1; display: flex; flex-direction: column; min-width: 0;
  border: 4px solid #4e5b92; border-top: 0; border-radius: 7px 7px 5px 5px; overflow: hidden; background: #f0effd;
`;
const TitleBar = styled.header`
  height: 22px; display: flex; align-items: center; margin: 0 -4px; padding: 2px 6px 0;
  color: #fff; border-top: 1px solid #6f7eb6; border-bottom: 1px solid #3a4475;
  background: linear-gradient(90deg, #38427a, #5262a4 50%, #36416e);
`;
const Title = styled.h1`margin: 0; padding-left: 5px; flex: 1; font: 11px/14px ${ui}; white-space: nowrap;`;
const SmallBtn = styled.button`width: ${(p) => p.$w || 18}px; height: 16px; display: flex; align-items: center; justify-content: center; flex: none;`;
const Top = styled.div`background: linear-gradient(90deg, #f1effe, #f8f8ff 50%, #fbfaff); display: flex; flex-direction: column; gap: 2px; padding-bottom: 2px;`;
const MenuBar = styled.nav`height: 22px; display: flex; align-items: center; gap: 1px; padding: 2px 3px 0 4px;`;
const MenuItem = styled.button`padding: 0 7px; height: 20px; white-space: nowrap; u { text-underline-offset: 2px; }`;
const Spacer = styled.div`flex: 1; ${(p) => p.$line && "border-top: 1px solid #000; align-self: stretch;"}`;

const ToolRow = styled.div`display: flex; gap: 3px; padding-left: 4px;`;
const Bar = styled.div`
  display: flex; align-items: center; flex: none; height: 24px; padding-right: 2px; border-radius: 4px;
  background: linear-gradient(#fcfcff, #f6f5ff 60%, #eeedfb);
`;
const Grip = styled.i`
  flex: none;
  ${(p) => p.$h
    ? css`height: 2px; width: 14px; margin: 4px auto 2px; background: repeating-linear-gradient(90deg, #bcbcca 0 2px, transparent 2px 4px);`
    : css`width: 2px; height: 15px; margin: 0 2px; background: repeating-linear-gradient(#bcbcca 0 2px, transparent 2px 4px);`}
`;
const ToolBtn = styled.button`
  width: 22px; height: 22px; flex: none; display: flex; align-items: center; justify-content: center;
  background: ${(p) => (p.$hot ? "#ffff00" : "none")};
  box-shadow: ${(p) => (p.$hot ? "0 -3px #ffff00, 0 2px #ffff00" : "none")};
`;
const Split = styled.button`width: 10px; height: 22px; flex: none; display: flex; align-items: center; justify-content: center; opacity: ${(p) => (p.$off ? 0.4 : 1)};`;
const Sep = styled.i`
  flex: none;
  ${(p) => p.$h
    ? css`height: 1px; width: 14px; margin: 2px auto 3px; background: #ccccd2;`
    : css`width: 1px; height: 15px; margin: 0 2px 0 3px; background: #c8ccd2;`}
`;
const Combo = styled.label`
  width: ${(p) => p.$w}px; height: 20px; flex: none; display: flex; align-items: center; background: #fff; padding-left: ${(p) => p.$pad || 2}px;
`;
const ComboSelect = styled.select`appearance: none; flex: 1; min-width: 0; height: 18px; outline: 0;`;
const ComboArrow = styled.span`width: 14px; height: 20px; display: flex; align-items: center; justify-content: center; background: #f7f7fd;`;
const LayerMarks = styled.span`display: flex; align-items: center; gap: 1px; padding-right: 1px;`;
const Swatch = styled.i`width: 10px; height: 10px; margin-right: ${(p) => p.$gap || 2}px; background: #000; flex: none;`;
const Stroke = styled.i`width: ${(p) => p.$w}px; height: 1px; margin-right: 5px; background: #000; flex: none;`;
const NumBtn = styled.button`width: 22px; height: 22px; padding-right: 3px; font: italic bold 19px/22px "DejaVu Sans", sans-serif; color: #0b3f9a; text-align: center;`;

/* ---------- middle ---------- */
const Main = styled.div`flex: 1; display: flex; min-height: 0; background: #f0effd;`;
const LeftBars = styled.div`width: 78px; flex: none; display: flex; align-items: flex-start; gap: 2px; padding: 2px 1px 0;`;
const VBar = styled.div`
  width: 24px; display: flex; flex-direction: column; align-items: center; padding-bottom: 1px; border-radius: 4px;
  background: linear-gradient(90deg, #fbfbff, #f6f5ff 60%, #eeedfb);
`;
const Doc = styled.section`flex: 1; min-width: 0; display: flex; flex-direction: column; padding-bottom: 4px;`;
const DocTabs = styled.div`height: 22px; display: flex; align-items: center; background: linear-gradient(#f2f1fe, #fbfaff); padding-right: 1px;`;
const DocTab = styled.button`
  position: relative; height: 20px; margin-top: 2px; padding: 0 12px 0 16px; display: flex; align-items: center; gap: 3px; font-weight: bold; z-index: 0; white-space: nowrap;
  &::before, &::after { content: ""; position: absolute; inset: 0; z-index: -1; clip-path: polygon(0 100%, 4px 92%, 12px 8%, 16px 0, calc(100% - 14px) 0, calc(100% - 10px) 8%, 100% 100%); }
  &::before { background: #b9c3cd; }
  &::after { inset: 1px 1px 0; background: linear-gradient(#f4f4fb, #e3e4f3); }
`;
const CanvasBox = styled.div`
  flex: 1; min-height: 0; display: flex; background: #fff; border: solid #c6ced4; border-width: 1px 1px 0; overflow: hidden;
`;
const Drawing = styled.svg`flex: 1; min-width: 0; shape-rendering: crispEdges;`;
const SheetRow = styled.div`
  height: 18px; display: flex; align-items: stretch; border: solid #c6ced4; border-width: 0 1px 1px;
`;
const NavBtn = styled.button`width: 15px; display: flex; align-items: center; justify-content: center; border: solid #d0d0da; border-width: 0 1px 1px 0; height: 15px;`;
const Sheet = styled.button`
  height: 16px; padding: ${(p) => (p.$on ? "0 2px" : "0 5px")}; line-height: 14px; background: ${(p) => (p.$on ? "#fff" : "#f8f8ff")};
  border-top: 1px solid ${(p) => (p.$on ? "#fff" : "#000")}; font-weight: ${(p) => (p.$on ? "bold" : "normal")};
`;
const Slash = ({ d, top }) => (
  <svg width="9" height="16" viewBox="0 0 9 16" aria-hidden="true">
    <path d={d} fill="none" stroke="#000" strokeWidth="1.2" />
    {top && <path d="M5 .5H9" stroke="#000" />}
  </svg>
);

/* ---------- properties ---------- */
const Panel = styled.aside`width: 269px; flex: none; display: flex; flex-direction: column; padding: 0 2px 0 5px;`;
const PanelHead = styled.div`height: 24px; display: flex; align-items: center; padding: 0 2px; background: linear-gradient(#fafaff, #f3f2fe);`;
const PanelTitle = styled.h2`margin: 0; padding-left: 5px; flex: 1; font: 11px/14px ${ui};`;
const PickRow = styled.div`display: flex; align-items: center; height: 34px; gap: 4px;`;
const PickCombo = styled.label`
  width: 180px; height: 23px; display: flex; align-items: stretch; background: #fff; border: solid #c3ced0; border-top-color: #7a8484; border-width: 1px 1px 2px 2px; padding-left: 1px; margin-right: 1px;
  select { font: bold 13px/18px "Liberation Sans", sans-serif; appearance: none; flex: 1; min-width: 0; outline: 0; }
  span { width: 13px; display: flex; align-items: center; justify-content: center; background: linear-gradient(90deg, #eee, #ccc); border-left: 1px solid #aaa; }
`;
const PropBox = styled.div`height: 342px; background: #fff; border: 2px solid #c6d0d2; border-right: 1px solid #d8dce4; border-bottom-width: 1px;`;
const PropTable = styled.table`
  width: 100%; border-collapse: separate; border-spacing: 0; table-layout: fixed;
  td, th { height: 16px; padding: 0; text-align: left; line-height: 15px; font-weight: normal; border: solid #c0c0c0; border-width: 0 0 1px 1px; white-space: nowrap; overflow: hidden; }
  td:first-child { border: 0; }
  tr:first-child > * { height: 15px; line-height: 14px; }
  tr[data-group] th { font-weight: bold; }
`;
const Value = styled.td`color: ${(p) => (p.$dim ? "#808080" : "#000")};`;
const ValueRow = styled.div`display: flex; align-items: center; height: 14px;`;
const Fold = styled.button`display: block; width: 9px; height: 9px; margin: 0 auto; border: 1px solid #000; background: linear-gradient(#000, #000) center / 7px 1px no-repeat;`;
const ColorBox = styled.i`width: 9px; height: 9px; border: 1px solid #000; margin: 1px 2px 0 4px;`;
const PanelTabs = styled.div`margin-top: auto; height: 25px; display: flex; border-top: 1px solid #c6d0d2; background: linear-gradient(#f1f0fe, #fbfbff); padding-left: 1px;`;
const PanelTab = styled.button`
  height: 19px; padding: 0 5px; border: 1px solid #c6d0d2; border-top: 0; border-radius: 0 0 3px 3px; margin-right: -1px;
  background: ${(p) => (p.$on ? "#e9e8f6" : "#fbfbff")};
`;

/* ---------- command line ---------- */
const Command = styled.section`display: flex; height: 62px; padding: 0 2px 0 78px; background: #f0effd;`;
const CmdHandle = styled.div`width: 25px; display: flex; flex-direction: column; align-items: center; background: linear-gradient(90deg, #fbfbff, #f0effd);`;
const CmdName = styled.span`writing-mode: vertical-rl; height: 30px; line-height: 14px; margin-top: 7px; font-size: 11px;`;
const CmdBox = styled.div`
  flex: 1; min-width: 0; display: flex; flex-direction: column; background: #fff; border: solid #c6d0d2; border-width: 2px 0 1px 2px;
  font: 12px/15px "Liberation Mono", monospace;
`;
const History = styled.div`flex: 1; display: flex; border-bottom: 1px solid #000; min-height: 0;`;
const Log = styled.pre`margin: 0; flex: 1; padding-top: 3px; font: inherit;`;
const VScroll = styled.div`width: 15px; display: flex; flex-direction: column; button { flex: 1; }`;
const ScrollBtn = styled.button`display: flex; align-items: center; justify-content: center; background: linear-gradient(90deg, #eaeaea, #cfcfcf); border: 1px solid #b8b8b8; min-width: ${(p) => p.$w || 0}px; overflow: hidden;`;
const Entry = styled.div`height: 15px; display: flex;`;
const Prompt = styled.label`flex: 1; display: flex; height: 17px; line-height: 17px; padding: 1px 0 0 1px; input { flex: 1; min-width: 0; outline: 0; padding-left: 4px; }`;
const HTrack = styled.div`width: 25px; background: linear-gradient(#38427a, #5262a4);`;

/* ---------- status bar ---------- */
const Status = styled.footer`height: 22px; display: flex; align-items: flex-end; gap: 2px; padding: 0 2px 1px 1px; background: #f0effd;`;
const Coords = styled.output`width: 253px; height: 18px; border: 1px solid #000; white-space: pre; line-height: 15px; margin-right: 1px;`;
const Toggle = styled.button`
  height: 18px; padding: ${(p) => (p.$on ? "2px 5px 0 6px" : "1px 6px 0")}; white-space: nowrap; border: 1px solid;
  border-color: ${(p) => (p.$on ? "#000 #f0effd #f0effd #000" : "#fbfbff #c6c8d6 #c6c8d6 #fbfbff")};
`;
const StatusText = styled.span`padding: 0 0 1px 2px;`;
const StatusSlot = styled.i`width: 22px; height: 18px; border: 1px solid #c6d0d2; border-right-color: #fff; border-bottom-color: #fff;`;

const Overlay = styled.svg`position: absolute; left: ${(p) => p.$x}px; top: ${(p) => p.$y}px; pointer-events: none; z-index: 5;`;

const menus = ["_File", "_Edit", "_View", "_Insert", "F_ormat", "_Tools", "_Draw", "Dime_nsion", "_Modify", "E_xpress", "_Window", "_Help"];
const standard = "new open save | print preview publish | cut copy paste match | undo > redo >> | pan zoomrt zoomwin zoomprev | calc design palette bluecalc | find help".split(" ");
const toolbox = "earth saves numx cpa cpb cpc cpd diam target carc twolines aframe abc txt attach crossa crossb crossc crossd waves selnote addcirc inchmm mminch xref sorts hline vline redsel rotate points xblue circline grid bolt addsel remsel | key book install".split(" ");
const dims = "dlin dalign darc dord | drad djog ddia dang | dquick dbase dcont | dspace dbreak leader tol center inspect jogline | oblique | dedit dtedit doverride dupdate |".split(" ");
const extra = "numx cpa cpx cptxt folder1 folder2 clip xy sel4 brk books key install".split(" ");
const drawTools = "line xline pline polygon rect arc circle cloud spline ellipse ellarc insert block point hatch gradient boundary table3 table mtext".split(" ");
const modifyTools = "erase copyobj mirror offset array move rotateobj scale stretch lengthen trim extend brkpt brk2 join chamfer fillet explode | qselect".split(" ");
const snapTools = "s1 s2 | s3 s4 s5 s6 s7 s8 s9 s10 | s11 s12 s13 s14 | s15 s16 | s17".split(" ");

const Tools = ({ list, vertical }) =>
  list.map((n, i) =>
    n === "|" ? <Sep key={i} $h={vertical} />
      : n === ">" || n === ">>" ? <Split key={i} $off={n === ">>"} aria-label="More"><Icon name="tri" /></Split>
        : <ToolBtn key={i} aria-label={n} $hot={n === "points"}><Icon name={n} /></ToolBtn>
  );

const props = [
  ["General"], ["Layer", "0"], ["Linetype", "ByLayer"], ["Linetype scale", "1"], ["Thickness", "0"], ["Color", "ByLayer", "box"], ["LineWeight", "ByLayer", "line"],
  ["View"], ["Center X", "227.7452", "dim"], ["Center Y", "-214.1212", "dim"], ["Center Z", "0", "dim"], ["Height", "262.5179", "dim"], ["Width", "415.2188", "dim"],
  ["Other"], ["UCS Icon On", "No"], ["UCS Name", ""], ["Snap On", "No"], ["Grid On", "No"],
];

const points = [[308, 328], [255, 353], [361, 358], [188, 391], [237, 417], [290, 397], [381, 409], [440, 455], [307, 472], [377, 483], [208, 527], [267, 545], [339, 541], [415, 524]];
const OFFSET = 454;
const Cross = ({ x, y }) => <path d={`M${x - 8} ${y - 8}l16 16M${x + 8} ${y - 8}l-16 16`} />;
const Part = ({ x, y }) => (
  <>
    <rect x={x - 40.5} y={y - 26.5} width="40" height="27" />
    <path d={`M${x - 23.5} ${y - 22.5}h6l4 3l2 4v4l-2 4l-4 3h-6l-4 -3l-2 -4v-4l2 -4z`} />
  </>
);

const toggles = [["SNAP"], ["GRID"], ["ORTHO"], ["POLAR", 1], ["ESNAP", 1], ["OTRACK", 1], ["LWT", 1], ["MODEL", 1], ["TABLET"], ["DYN"]];

export default function App() {
  return (
    <Desktop>
      <Global />
      <Frame>
        <TitleBar>
          <Icon name="app" />
          <Title>ZWCAD Classic Trial Version - [C:\Users\dmatusz\My Cubby\07--zrzuty-ekranu\zwtoolbox.dwg]</Title>
          <SmallBtn aria-label="Minimize"><Icon name="minw" /></SmallBtn>
          <SmallBtn aria-label="Maximize"><Icon name="maxw" /></SmallBtn>
          <SmallBtn aria-label="Close"><Icon name="closew" /></SmallBtn>
        </TitleBar>
        <Top>
          <MenuBar>
            <Grip />
            <Icon name="dwg" />
            {menus.map((m) => {
              const [a, b] = m.split("_");
              return <MenuItem key={m}>{a}<u>{b[0]}</u>{b.slice(1)}</MenuItem>;
            })}
            <Spacer />
            <SmallBtn $w={16} aria-label="Minimize drawing"><Icon name="min" /></SmallBtn>
            <SmallBtn $w={16} aria-label="Restore drawing"><Icon name="restore" /></SmallBtn>
            <SmallBtn $w={16} aria-label="Close drawing"><Icon name="close" /></SmallBtn>
          </MenuBar>
          <ToolRow>
            <Bar><Grip /><Tools list={standard} /></Bar>
          </ToolRow>
          <ToolRow>
            <Bar>
              <Grip />
              <Tools list={["layers", "layermgr", "layerstate", "|"]} />
              <Combo $w={301} $pad={6}>
                <LayerMarks>
                  <Icon name="bulb" /><Icon name="lock" /><Icon name="sun" /><Icon name="sunvp" />
                </LayerMarks>
                <Swatch />
                <ComboSelect aria-label="Layer"><option>0</option></ComboSelect>
                <ComboArrow><Icon name="tri" /></ComboArrow>
              </Combo>
              <Sep />
              <Combo $w={120} $pad={7}>
                <Swatch $gap={4} />
                <ComboSelect aria-label="Color"><option>ByLayer</option></ComboSelect>
                <ComboArrow><Icon name="tri" /></ComboArrow>
              </Combo>
              <Sep />
              <Combo $w={160} $pad={7}>
                <Stroke $w={63} />
                <ComboSelect aria-label="Linetype"><option>ByLayer</option></ComboSelect>
                <ComboArrow><Icon name="tri" /></ComboArrow>
              </Combo>
              <Sep />
              <Combo $w={117} $pad={4}>
                <Stroke $w={38} />
                <ComboSelect aria-label="Lineweight"><option>ByLayer</option></ComboSelect>
                <ComboArrow><Icon name="tri" /></ComboArrow>
              </Combo>
              <Sep />
              <Tools list={["calc"]} />
            </Bar>
          </ToolRow>
          <ToolRow>
            <Bar><Grip /><Tools list={toolbox} /></Bar>
          </ToolRow>
          <ToolRow>
            <Bar>
              <Grip /><Tools list={dims} />
              <Combo $w={152}>
                <ComboSelect aria-label="Dimension style"><option>ISO-25</option></ComboSelect>
                <ComboArrow><Icon name="tri" /></ComboArrow>
              </Combo>
              <Tools list={["dstyle"]} />
            </Bar>
            <Bar>
              <Grip />
              {[1, 2, 3, 4, 5, 6, 7, 8].map((n) => <NumBtn key={n}>{n}</NumBtn>)}
              <Tools list={["power", "stop"]} />
            </Bar>
            <Bar><Grip /><Tools list={extra} /></Bar>
          </ToolRow>
        </Top>
        <Main>
          <LeftBars>
            <VBar><Grip $h /><Tools list={drawTools} vertical /></VBar>
            <VBar><Grip $h /><Tools list={modifyTools} vertical /></VBar>
            <VBar><Grip $h /><Tools list={snapTools} vertical /></VBar>
          </LeftBars>
          <Doc>
            <DocTabs>
              <DocTab><Icon name="dwg" />C:\...\zwtoolbox.dwg</DocTab>
              <Spacer />
              <SmallBtn $w={14} aria-label="Previous tab"><Icon name="left" /></SmallBtn>
              <SmallBtn $w={14} aria-label="Next tab"><Icon name="right" /></SmallBtn>
              <SmallBtn $w={14} aria-label="Tab list"><Icon name="down" /></SmallBtn>
              <SmallBtn $w={14} aria-label="Close tab"><Icon name="close" /></SmallBtn>
            </DocTabs>
            <CanvasBox>
              <Drawing>
                <g transform="translate(-83 -176)" fill="none" stroke="#000">
                  <text x="310" y="230" fontSize="42" fill="#000" strokeWidth="1" fontFamily="Liberation Sans, sans-serif">Szyk według punktów</text>
                  <rect x="175.5" y="289.5" width="41" height="27" />
                  <circle cx="196" cy="303" r="9" />
                  <rect x="629.5" y="289.5" width="41" height="27" />
                  <circle cx="650" cy="303" r="9" />
                  {points.map(([x, y]) => (
                    <g key={x}>
                      <Cross x={x} y={y} />
                      <Part x={x + OFFSET} y={y} />
                      <Cross x={x + OFFSET} y={y} />
                    </g>
                  ))}
                  <path d="M489.5 397.5H536.5V386.5L565.5 406.5L536.5 425.5V414.5H489.5Z" />
                  <path d="M769 176.5H861M814.5 176V222M808.5 176.5V182.5H820.5V176.5" />
                </g>
              </Drawing>
            </CanvasBox>
            <SheetRow>
              <NavBtn aria-label="First sheet"><Icon name="first" /></NavBtn>
              <NavBtn aria-label="Previous sheet"><Icon name="prev" /></NavBtn>
              <NavBtn aria-label="Next sheet"><Icon name="next" /></NavBtn>
              <NavBtn aria-label="Last sheet"><Icon name="last" /></NavBtn>
              <Slash d="" />
              <Slash d="M1 0L8 14" />
              <Sheet $on>Model</Sheet>
              <Slash top d="M1 14L7 0M4 7L8 14" />
              <Sheet>Layout1</Sheet>
              <Slash top d="M1 14L7 0M1 0L8 14" />
              <Sheet>Layout2</Sheet>
              <Slash top d="M1 14L7 0M0 .5H9" />
              <Spacer $line />
            </SheetRow>
          </Doc>
          <Panel>
            <PanelHead>
              <Grip />
              <PanelTitle>Properties</PanelTitle>
              <SmallBtn $w={16} aria-label="Pin"><Icon name="pin" size={14} /></SmallBtn>
              <SmallBtn $w={16} aria-label="Close panel"><Icon name="close" /></SmallBtn>
            </PanelHead>
            <PickRow>
              <PickCombo>
                <select aria-label="Selection"><option>No selection</option></select>
                <span><Icon name="tri" /></span>
              </PickCombo>
              <ToolBtn aria-label="Toggle pick add"><Icon name="pickadd" /></ToolBtn>
              <ToolBtn aria-label="Select objects"><Icon name="pick" /></ToolBtn>
              <ToolBtn aria-label="Quick select"><Icon name="filter" /></ToolBtn>
            </PickRow>
            <PropBox>
              <PropTable>
                <colgroup><col style={{ width: 18 }} /><col style={{ width: 120 }} /><col /></colgroup>
                <tbody>
                  {props.map(([name, value, kind]) => (
                    <tr key={name} data-group={value === undefined ? "" : undefined}>
                      <td>{value === undefined && <Fold aria-label={"Collapse " + name} />}</td>
                      <th scope="row">{name}</th>
                      <Value $dim={kind === "dim"}>
                        <ValueRow>
                          {kind === "box" && <ColorBox />}
                          {kind === "line" && <Stroke $w={16} />}
                          {value}
                        </ValueRow>
                      </Value>
                    </tr>
                  ))}
                </tbody>
              </PropTable>
            </PropBox>
            <PanelTabs>
              <PanelTab>Calculator</PanelTab>
              <PanelTab $on>Properties</PanelTab>
            </PanelTabs>
          </Panel>
        </Main>
        <Command>
          <CmdHandle>
            <Grip $h />
            <CmdName>Co...</CmdName>
            <SmallBtn aria-label="Close command line"><Icon name="close" /></SmallBtn>
          </CmdHandle>
          <CmdBox>
            <History>
              <Log>{"Select entity to modify:\nCancel"}</Log>
              <VScroll>
                <ScrollBtn aria-label="Scroll up"><Icon name="up" /></ScrollBtn>
                <ScrollBtn aria-label="Scroll thumb" />
                <ScrollBtn aria-label="Scroll down"><Icon name="tri" /></ScrollBtn>
              </VScroll>
            </History>
            <Entry>
              <Prompt>Command:<input type="text" /></Prompt>
              <ScrollBtn $w={15} aria-label="Scroll left"><Icon name="sleft" size={13} /></ScrollBtn>
              <ScrollBtn $w={15} aria-label="Horizontal thumb" />
              <HTrack />
              <ScrollBtn $w={15} aria-label="Scroll right"><Icon name="sright" size={13} /></ScrollBtn>
            </Entry>
          </CmdBox>
        </Command>
        <Status>
          <Coords>{"390.7604,   -82.8622,   0"}</Coords>
          {toggles.map(([t, on]) => <Toggle key={t} $on={on} aria-pressed={!!on}>{t}</Toggle>)}
          <StatusText>Ready</StatusText>
          <Spacer />
          <StatusSlot />
          <SmallBtn $w={22} aria-label="Status menu"><Icon name="down" /></SmallBtn>
          <svg width="14" height="14" viewBox="0 0 14 14" aria-hidden="true">
            <path d="M1 13L12 2M5 13L12 6M9 13L12 10" stroke="#4e5b92" strokeWidth="1.6" />
          </svg>
        </Status>
      </Frame>
      <Overlay $x={590} $y={118} width="100" height="84" viewBox="590 118 100 84" aria-hidden="true">
        <path d="M682 122L603 190" stroke="#f00" strokeWidth="2.2" />
        <path d="M592 198L601 183L609 192Z" fill="#f00" />
      </Overlay>
      <Overlay $x={823} $y={9} width="14" height="20" viewBox="0 0 14 20" aria-hidden="true">
        <path d="M1 1V16L4 13L7 19L9.5 18L7 12H12Z" fill="#fff" stroke="#111" />
      </Overlay>
    </Desktop>
  );
}
